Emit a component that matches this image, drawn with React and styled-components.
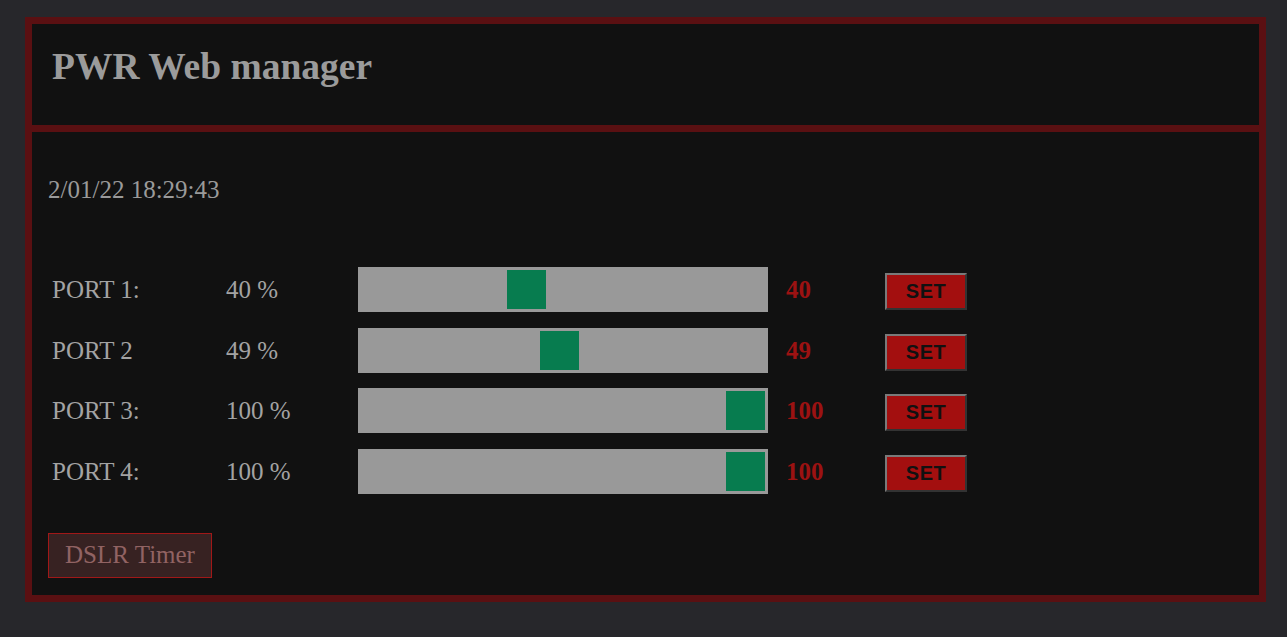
import React from "react";
import styled, { createGlobalStyle } from "styled-components";

const Global = createGlobalStyle`
  html, body {
    margin: 0;
    padding: 0;
    background: #27272b;
    height: 100%;
  }
  body {
    font-family: "Liberation Serif", "Times New Roman", serif;
  }
`;

const Frame = styled.div`
  margin: 17px 21px 0 25px;
  border: 7px solid #5a1012;
  background: #111111;
  display: flex;
  flex-direction: column;
`;

const Header = styled.header`
  height: 108px;
  box-sizing: border-box;
  padding: 22px 20px 0;
  border-bottom: 7px solid #5a1012;
`;

const Title = styled.h1`
  margin: 0;
  font-size: 37.5px;
  font-weight: bold;
  color: #9b9b9b;
  line-height: 42px;
`;

const Body = styled.main`
  padding: 43.5px 16px 17px;
  display: flex;
  flex-direction: column;
  align-items: flex-start;
`;

const DateLine = styled.div`
  font-size: 25px;
  color: #9a9a9a;
  line-height: 28.75px;
`;

const Ports = styled.div`
  margin: 62.7px 0 0 4px;
  display: grid;
  grid-template-columns: 174px 132px 428px 99px 82px;
  grid-auto-rows: 45px;
  row-gap: 15.67px;
  align-items: center;
`;

const Cell = styled.div`
  margin-top: 2px;
  font-size: 25px;
  color: #a3a3a3;
  line-height: 28.75px;
`;

const Track = styled.div`
  position: relative;
  width: 410px;
  height: 45px;
  background: #999999;
`;

const Thumb = styled.div`
  position: absolute;
  top: 3px;
  width: 39px;
  height: 39px;
  background: #077c4f;
`;

const Value = styled.div`
  margin-top: 2px;
  font-size: 25px;
  font-weight: bold;
  color: #9c1212;
  line-height: 28.75px;
`;

const SetButton = styled.button`
  margin-top: 4px;
  width: 82px;
  height: 37px;
  box-sizing: border-box;
  padding: 0;
  background: #a30f0f;
  border: 2px solid;
  border-color: #7a7a7a #333333 #333333 #7a7a7a;
  font-family: "Liberation Sans", Arial, sans-serif;
  font-weight: bold;
  font-size: 20px;
  letter-spacing: 0.5px;
  color: #111111;
  cursor: pointer;
`;

const TimerButton = styled.button`
  margin-top: 39px;
  width: 164px;
  height: 45px;
  box-sizing: border-box;
  background: #372222;
  border: 1px solid #a01818;
  font-family: "Liberation Serif", "Times New Roman", serif;
  font-size: 25px;
  color: #916363;
  padding: 0;
  cursor: pointer;
`;

const ports = [
  { label: "PORT 1:", value: 40 },
  { label: "PORT 2", value: 49 },
  { label: "PORT 3:", value: 100 },
  { label: "PORT 4:", value: 100 },
];

export default function App() {
  return (
    <>
      <Global />
      <Frame>
        <Header>
          <Title>PWR Web manager</Title>
        </Header>
        <Body>
          <DateLine>2/01/22 18:29:43</DateLine>
          <Ports>
            {ports.map((p) => (
              <React.Fragment key={p.label}>
                <Cell>{p.label}</Cell>
                <Cell>{p.value} %</Cell>
                <Track>
                  <Thumb style={{ left: 3 + (p.value / 100) * 365 }} />
                </Track>
                <Value>{p.value}</Value>
                <SetButton>SET</SetButton>
              </React.Fragment>
            ))}
          </Ports>
          <TimerButton>DSLR Timer</TimerButton>
        </Body>
      </Frame>
    </>
  );
}
